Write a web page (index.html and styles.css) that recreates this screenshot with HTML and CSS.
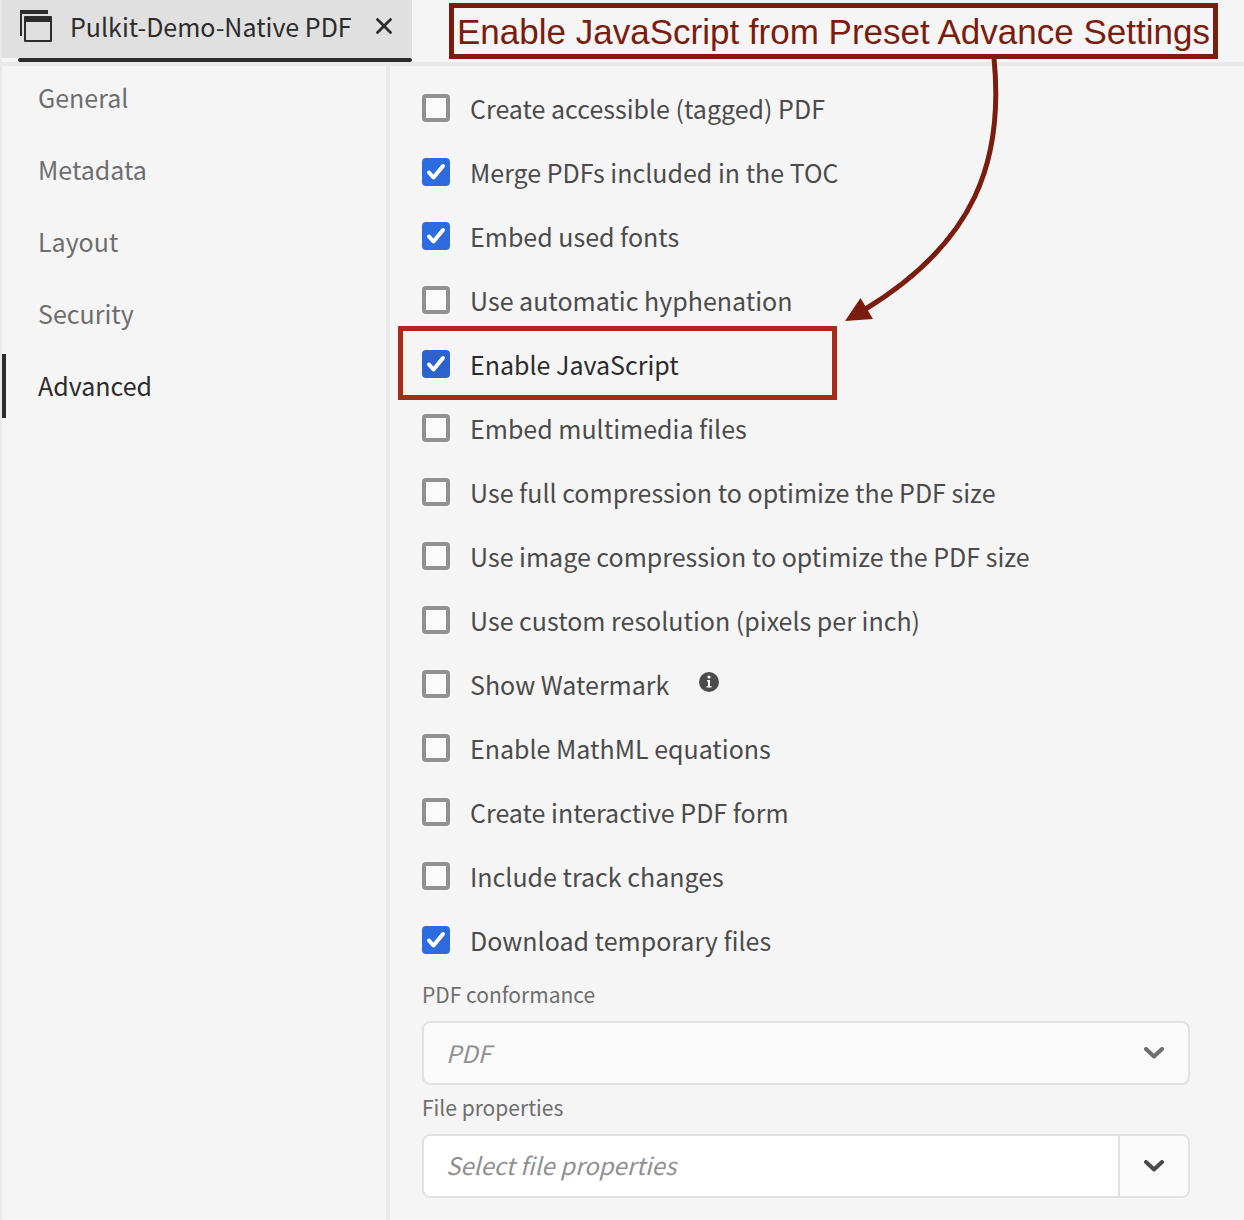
FILE: index.html
```html
<!DOCTYPE html>
<html lang="en">
<head>
<meta charset="utf-8">
<title>Pulkit-Demo-Native PDF</title>
<meta name="viewport" content="width=device-width, initial-scale=1">
<link rel="stylesheet" href="styles.css">
</head>
<body>
<div class="app">
  <header class="tabbar">
    <div class="tab">
      <svg class="tab-icon" width="32" height="32" viewBox="0 0 32 32" aria-hidden="true">
        <path d="M0 0H28V4H2V26H0Z" fill="#2c2c2c"/>
        <path fill-rule="evenodd" d="M5 6H31a1 1 0 0 1 1 1V31a1 1 0 0 1-1 1H5a1 1 0 0 1-1-1V7a1 1 0 0 1 1-1ZM6 12V30H30V12Z" fill="#2c2c2c"/>
      </svg>
      <span class="tab-title">Pulkit-Demo-Native PDF</span>
      <button class="tab-close" type="button" aria-label="Close tab">
        <svg width="16" height="16" viewBox="0 0 16 16" aria-hidden="true"><path d="M1.500 1.500L14.500 14.500M14.500 1.500L1.500 14.500" stroke="#2c2c2c" stroke-width="2.800" stroke-linecap="round"/></svg>
      </button>
    </div>
    <p class="callout">Enable JavaScript from Preset Advance Settings</p>
  </header>
  <div class="body">
    <nav class="sidebar">
      <a class="nav-link" href="#general">General</a>
      <a class="nav-link" href="#metadata">Metadata</a>
      <a class="nav-link" href="#layout">Layout</a>
      <a class="nav-link" href="#security">Security</a>
      <a class="nav-link nav-link-active" href="#advanced" aria-current="page">Advanced</a>
    </nav>
    <main class="settings">
      <label class="option"><input type="checkbox" class="check"><span>Create accessible (tagged) PDF</span></label>
      <label class="option"><input type="checkbox" class="check" checked><span>Merge PDFs included in the TOC</span></label>
      <label class="option"><input type="checkbox" class="check" checked><span>Embed used fonts</span></label>
      <label class="option"><input type="checkbox" class="check"><span>Use automatic hyphenation</span></label>
      <label class="option option-marked"><input type="checkbox" class="check" checked><span>Enable JavaScript</span></label>
      <label class="option"><input type="checkbox" class="check"><span>Embed multimedia files</span></label>
      <label class="option"><input type="checkbox" class="check"><span>Use full compression to optimize the PDF size</span></label>
      <label class="option"><input type="checkbox" class="check"><span>Use image compression to optimize the PDF size</span></label>
      <label class="option"><input type="checkbox" class="check"><span>Use custom resolution (pixels per inch)</span></label>
      <div class="option-row">
        <label class="option"><input type="checkbox" class="check"><span>Show Watermark</span></label>
        <svg class="info" width="20" height="20" viewBox="0 0 20 20" role="img" aria-label="Information">
          <circle cx="10" cy="10" r="10" fill="#4b4b4b"/>
          <circle cx="10" cy="5" r="1.600" fill="#fff"/>
          <path d="M8 8H11V14H12.500V15.500H7.500V14H9V9.500H8Z" fill="#fff"/>
        </svg>
      </div>
      <label class="option"><input type="checkbox" class="check"><span>Enable MathML equations</span></label>
      <label class="option"><input type="checkbox" class="check"><span>Create interactive PDF form</span></label>
      <label class="option"><input type="checkbox" class="check"><span>Include track changes</span></label>
      <label class="option"><input type="checkbox" class="check" checked><span>Download temporary files</span></label>

      <label class="field-label" for="conformance">PDF conformance</label>
      <div class="picker">
        <select id="conformance" class="picker-select" disabled><option>PDF</option></select>
        <svg class="picker-chevron" width="20" height="12" viewBox="0 0 20 12" aria-hidden="true"><path d="M2 2L10 9.500L18 2" fill="none" stroke="#6e6e6e" stroke-width="4" stroke-linecap="round" stroke-linejoin="round"/></svg>
      </div>

      <label class="field-label" for="properties">File properties</label>
      <div class="combo">
        <input id="properties" class="combo-input" type="text" placeholder="Select file properties">
        <button class="combo-button" type="button" aria-label="Show file properties">
          <svg width="20" height="12" viewBox="0 0 20 12" aria-hidden="true"><path d="M2 2L10 9.500L18 2" fill="none" stroke="#4b4b4b" stroke-width="4" stroke-linecap="round" stroke-linejoin="round"/></svg>
        </button>
      </div>
      <svg class="arrow" width="160" height="266" viewBox="844 58 160 266" aria-hidden="true">
        <path d="M994 58C1004 160 976 242 864 310" fill="none" stroke="#7a1c0e" stroke-width="5"/>
        <path d="M845 321L860.500 298L873 319Z" fill="#7a1c0e"/>
      </svg>
    </main>
  </div>
</div>
</body>
</html>
```
FILE: styles.css
```css
*,
*::before,
*::after { box-sizing: border-box; }

body {
  margin: 0;
  background: #f5f5f5;
  color: #4b4b4b;
  font: 25px/36px "Noto Sans CJK SC", "Noto Sans", sans-serif;
}

.app {
  display: flex;
  flex-direction: column;
  min-height: 100vh;
  border-left: 2px solid #e9e9e9;
}

.tabbar {
  display: flex;
  align-items: flex-start;
  gap: 37px;
  height: 66px;
  border-bottom: 4px solid #e9e9e9;
}

.tab {
  position: relative;
  display: flex;
  flex: none;
  align-items: center;
  width: 410px;
  height: 58px;
  padding: 0 20px 6px 18px;
  background: #e0e0e0;
  color: #2c2c2c;
}

.tab::after {
  content: "";
  position: absolute;
  left: 16px;
  right: 0;
  bottom: -4px;
  height: 4px;
  border-radius: 2px;
  background: #2c2c2c;
}

.tab-icon { margin-right: 18px; }

.tab-title { flex: 1; white-space: nowrap; }

.tab-close {
  display: flex;
  padding: 0;
  border: 0;
  background: none;
}

.callout {
  margin: 3px 0 0;
  padding: 2px 3px 0;
  border: 5px solid #7a1c0e;
  color: #7a1c0e;
  font: 35px/44px "Liberation Sans", Arial, sans-serif;
  white-space: nowrap;
}

.body { display: flex; flex: 1; }

.sidebar {
  display: flex;
  flex: none;
  flex-direction: column;
  gap: 8px;
  width: 388px;
  border-right: 4px solid #e9e9e9;
}

.nav-link {
  padding: 13px 32px 15px;
  border-left: 4px solid transparent;
  color: #6e6e6e;
  text-decoration: none;
}

.nav-link-active { border-color: #2c2c2c; color: #2c2c2c; }

.settings {
  position: relative;
  display: flex;
  flex: 1;
  flex-direction: column;
  padding: 10px 54px 22px 32px;
}

.option {
  position: relative;
  display: flex;
  align-items: center;
  gap: 20px;
  height: 64px;
}

.option-row { display: flex; align-items: center; gap: 30px; }

.info { margin-bottom: 4px; }

.option-marked { color: #2c2c2c; }

.option-marked::after {
  content: "";
  position: absolute;
  left: -24px;
  top: -6px;
  width: 439px;
  height: 74px;
  border: 5px solid #a62c17;
}

.check {
  flex: none;
  width: 28px;
  height: 28px;
  margin: 0;
  appearance: none;
  border: 4px solid #909090;
  border-radius: 4px;
  background: #fafafa;
}

.check:checked {
  border: 0;
  background: #2e6bdf url("data:image/svg+xml,%3Csvg xmlns='http://www.w3.org/2000/svg' viewBox='0 0 28 28'%3E%3Cpath d='M7 14.500L11.500 19.500L21 8' fill='none' stroke='white' stroke-width='4' stroke-linecap='round' stroke-linejoin='round'/%3E%3C/svg%3E");
}

.option-marked .check { background-color: #2c62cc; }

.field-label {
  padding: 6px 0 11px;
  color: #6e6e6e;
  font-size: 21px;
  line-height: 32px;
}

.picker { display: grid; align-items: center; }

.picker-select,
.picker-chevron { grid-area: 1 / 1; }

.picker-select {
  height: 64px;
  padding: 0 22px;
  appearance: none;
  border: 2px solid #e1e1e1;
  border-radius: 8px;
  background: #fafafa;
  color: #909090;
  font: inherit;
  font-size: 24px;
  font-style: italic;
  opacity: 1;
}

.picker-chevron { justify-self: end; margin-right: 26px; }

.combo {
  display: flex;
  height: 64px;
  overflow: hidden;
  border: 2px solid #e1e1e1;
  border-radius: 8px;
  background: #fff;
}

.combo-input {
  flex: 1;
  min-width: 0;
  padding: 0 22px 2px;
  border: 0;
  background: none;
  color: #4b4b4b;
  font: inherit;
  font-size: 24px;
  font-style: italic;
}

.combo-input::placeholder { color: #909090; opacity: 1; }

.combo-button {
  display: flex;
  align-items: center;
  justify-content: center;
  width: 70px;
  border: 0;
  border-left: 2px solid #e1e1e1;
  background: #fafafa;
}

.arrow {
  position: absolute;
  left: 454px;
  top: -8px;
  pointer-events: none;
}
```
